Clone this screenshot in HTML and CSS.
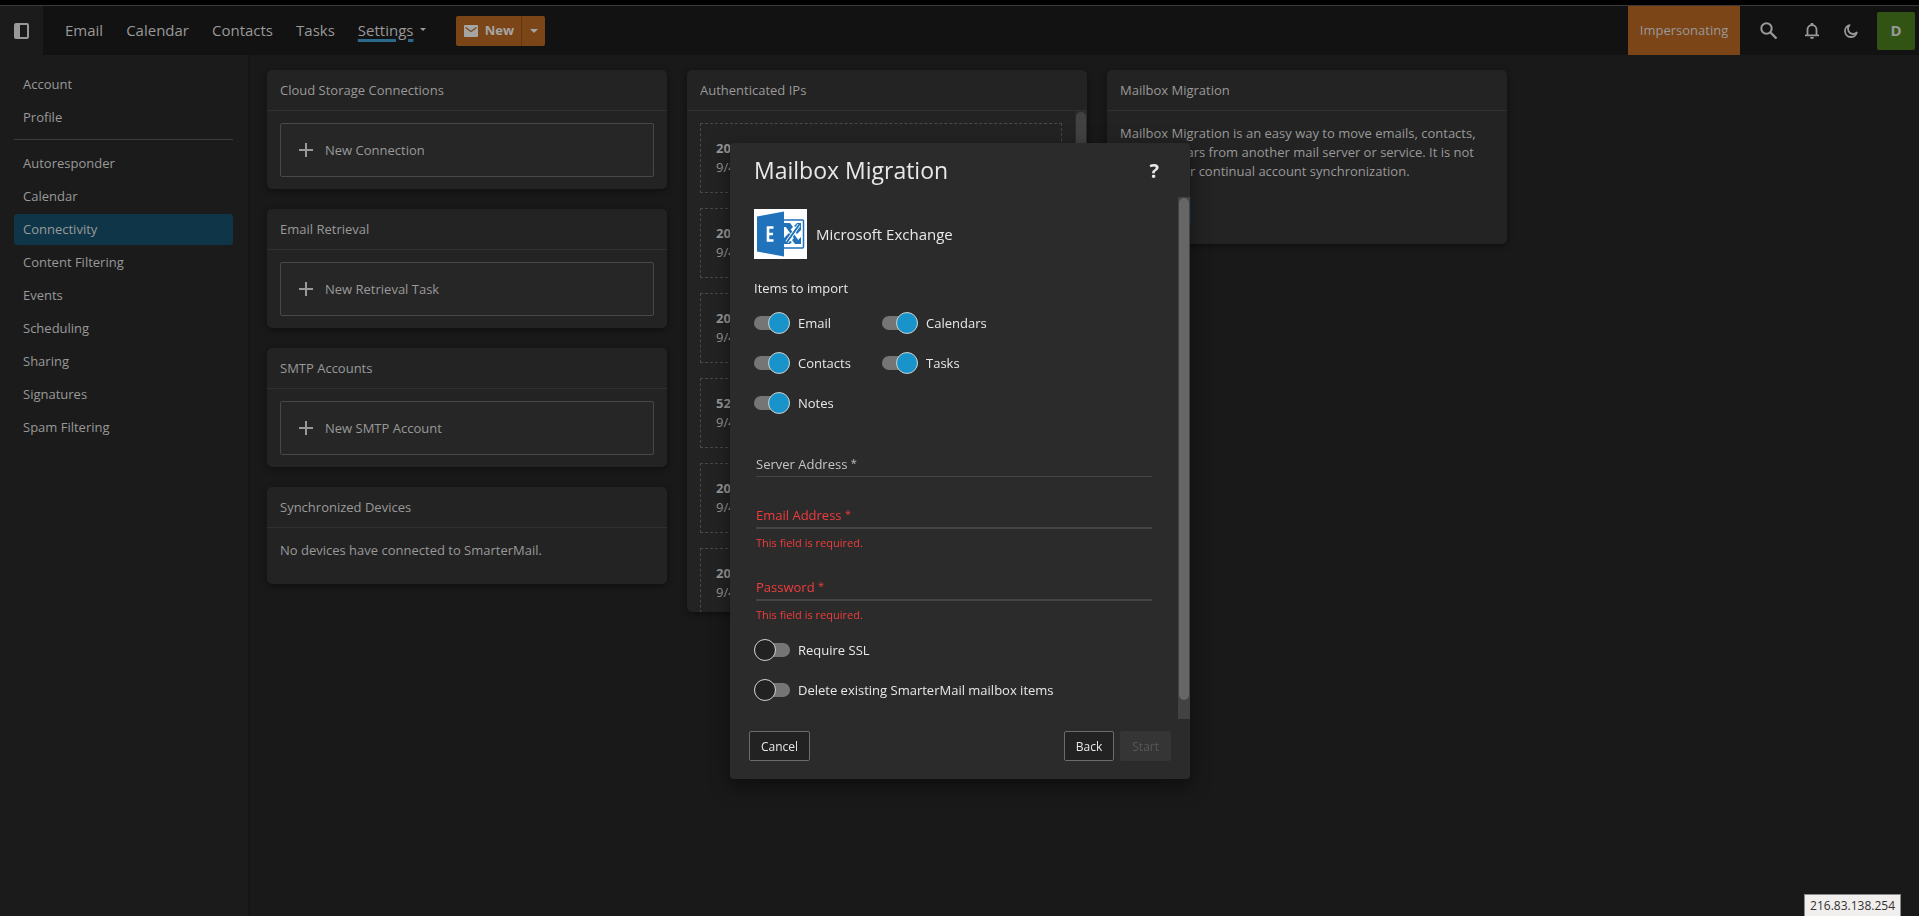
FILE: index.html
```
<!DOCTYPE html>
<html lang="en">
<head>
    <meta charset="UTF-8">
    <meta name="viewport" content="width=device-width, initial-scale=1.0">
    <title>Connectivity - SmarterMail</title>
    <link rel="stylesheet" href="styles.css">
</head>
<body>
    <header class="topbar">
        <button class="toggle-sidebar" aria-label="Toggle sidebar">
            <svg width="15" height="16" viewBox="0 0 15 16"><rect x="1" y="1" width="13" height="14" rx="1" fill="none" stroke="currentColor" stroke-width="2"/><path d="M1 1h5v14H1z" fill="currentColor"/></svg>
        </button>
        <nav class="main-nav">
            <a href="#">Email</a>
            <a href="#">Calendar</a>
            <a href="#">Contacts</a>
            <a href="#">Tasks</a>
            <a href="#" class="current"><span>Settings</span><i class="caret"></i></a>
        </nav>
        <div class="new-group">
            <button class="new-btn">
                <svg width="14" height="12" viewBox="0 0 14 12"><rect width="14" height="12" rx="1" fill="currentColor"/><path d="M1.500 2.500l5.500 4 5.500-4" fill="none" stroke="#7b4517" stroke-width="1.200"/></svg>
                New
            </button>
            <button class="new-more" aria-label="More"><i class="caret"></i></button>
        </div>
        <div class="top-actions">
            <button class="impersonating">Impersonating</button>
            <button class="icon-btn search" aria-label="Search">
                <svg width="18" height="18" viewBox="0 0 18 18" fill="none" stroke="currentColor"><circle cx="6.500" cy="6.500" r="5.200" stroke-width="2"/><path d="M10.500 10.500l6 6" stroke-width="2.400"/></svg>
            </button>
            <button class="icon-btn bell" aria-label="Notifications">
                <svg width="16" height="18" viewBox="0 0 16 18"><path d="M3.500 13V7.500a4.500 4.500 0 0 1 9 0V13M1 13.300h14" fill="none" stroke="currentColor" stroke-width="1.800"/><path d="M6.800 1h2.400v2H6.800zM6 15h4a2 2 0 0 1-4 0z" fill="currentColor"/></svg>
            </button>
            <button class="icon-btn moon" aria-label="Dark mode">
                <svg width="14" height="14" viewBox="0 0 14 14"><path d="M5.500 1.200A6 6 0 1 0 12.800 8.500 4.700 4.700 0 0 1 5.500 1.200z" fill="none" stroke="currentColor" stroke-width="1.800" stroke-linejoin="round"/></svg>
            </button>
            <button class="avatar">D</button>
        </div>
    </header>

    <div class="page">
        <aside class="sidebar">
            <a href="#">Account</a>
            <a href="#">Profile</a>
            <hr>
            <a href="#">Autoresponder</a>
            <a href="#">Calendar</a>
            <a href="#" class="active">Connectivity</a>
            <a href="#">Content Filtering</a>
            <a href="#">Events</a>
            <a href="#">Scheduling</a>
            <a href="#">Sharing</a>
            <a href="#">Signatures</a>
            <a href="#">Spam Filtering</a>
        </aside>

        <main class="content">
            <div class="column">
                <section class="card">
                    <h2>Cloud Storage Connections</h2>
                    <div class="card-body">
                        <button class="add-box"><i class="plus"></i>New Connection</button>
                    </div>
                </section>
                <section class="card">
                    <h2>Email Retrieval</h2>
                    <div class="card-body">
                        <button class="add-box"><i class="plus"></i>New Retrieval Task</button>
                    </div>
                </section>
                <section class="card">
                    <h2>SMTP Accounts</h2>
                    <div class="card-body">
                        <button class="add-box"><i class="plus"></i>New SMTP Account</button>
                    </div>
                </section>
                <section class="card">
                    <h2>Synchronized Devices</h2>
                    <div class="card-body note">
                        <p>No devices have connected to SmarterMail.</p>
                    </div>
                </section>
            </div>

            <div class="column">
                <section class="card">
                    <h2>Authenticated IPs</h2>
                    <div class="ip-scroll">
                        <div class="ip-list">
                            <div class="ip"><b>20</b><span>9/4</span></div>
                            <div class="ip"><b>20</b><span>9/4</span></div>
                            <div class="ip"><b>20</b><span>9/4</span></div>
                            <div class="ip"><b>52</b><span>9/4</span></div>
                            <div class="ip"><b>20</b><span>9/4</span></div>
                            <div class="ip"><b>20</b><span>9/4</span></div>
                        </div>
                        <div class="scrollbar"><div class="thumb"></div></div>
                    </div>
                </section>
            </div>

            <div class="column">
                <section class="card">
                    <h2>Mailbox Migration</h2>
                    <div class="card-body note">
                        <p>Mailbox Migration is an easy way to move emails, contacts, and calendars from another mail server or service. It is not intended for continual account synchronization.</p>
                        <button class="migrate">Start</button>
                    </div>
                </section>
            </div>
        </main>
    </div>

    <div class="overlay">
        <form class="modal" role="dialog" aria-labelledby="modal-title">
            <div class="modal-header">
                <h1 id="modal-title">Mailbox Migration</h1>
                <button type="button" class="help" aria-label="Help">?</button>
            </div>
            <div class="modal-scroll">
                <div class="modal-body">
                    <div class="provider">
                        <svg width="53" height="50" viewBox="0 0 53 50">
                            <rect width="53" height="50" fill="#fff"/>
                            <rect x="26" y="11" width="23.500" height="28" rx="1" fill="#fff" stroke="#2072ba" stroke-width="1.500"/>
                            <path d="M30 14h6l3 4-3 3-3-3h-3zM40 17l3-3h4v7l-4 4-3-3 3-3zM47 28v7h-6l-3-4 3-3 3 3zM38 33l-2 2h-6v-6l5-5 3 3-4 4z" fill="#2072ba"/>
                            <path d="M32 16l12 17" stroke="#2072ba" stroke-width="2.600"/>
                            <path d="M45 16L33 33" stroke="#fff" stroke-width="3.600"/>
                            <path d="M45 16L33 33" stroke="#2072ba" stroke-width="2"/>
                            <path d="M3 7.500l27-5v45l-27-5z" fill="#2072ba"/>
                            <path d="M19.500 18.500H14v13h5.500M14 25h5" fill="none" stroke="#fff" stroke-width="2.600"/>
                        </svg>
                        <span>Microsoft Exchange</span>
                    </div>

                    <p class="items-title">Items to import</p>
                    <div class="items">
                        <label class="switch"><input type="checkbox" checked>Email</label>
                        <label class="switch"><input type="checkbox" checked>Calendars</label>
                        <label class="switch"><input type="checkbox" checked>Contacts</label>
                        <label class="switch"><input type="checkbox" checked>Tasks</label>
                        <label class="switch"><input type="checkbox" checked>Notes</label>
                    </div>

                    <div class="field">
                        <label for="server">Server Address <sup>*</sup></label>
                        <input type="text" id="server">
                    </div>
                    <div class="field invalid">
                        <label for="email">Email Address <sup>*</sup></label>
                        <input type="text" id="email">
                        <p class="error">This field is required.</p>
                    </div>
                    <div class="field invalid">
                        <label for="password">Password <sup>*</sup></label>
                        <input type="password" id="password">
                        <p class="error">This field is required.</p>
                    </div>

                    <div class="options">
                        <label class="switch"><input type="checkbox">Require SSL</label>
                        <label class="switch"><input type="checkbox">Delete existing SmarterMail mailbox items</label>
                    </div>
                </div>
                <div class="scrollbar"><div class="thumb"></div></div>
            </div>
            <div class="modal-footer">
                <button type="button" class="btn">Cancel</button>
                <button type="button" class="btn back">Back</button>
                <button type="submit" class="btn" disabled>Start</button>
            </div>
        </form>
    </div>

    <div class="status-tip">216.83.138.254</div>
</body>
</html>
```
FILE: styles.css
```
:root {
    --bg: #191919;
    --bar: #121212;
    --side: #1b1b1b;
    --card: #232323;
    --line: #303030;
    --text: #999;
    --orange: #7b4517;
    --blue: #1994cb;
    --red: #f13c3c;
}

* {
    box-sizing: border-box;
}

body {
    margin: 0;
    min-height: 100vh;
    display: flex;
    flex-direction: column;
    border-top: 5px solid #000;
    background: var(--bg);
    color: var(--text);
    font-family: 'Open Sans', 'Segoe UI', 'Noto Sans', sans-serif;
    font-size: 13px;
    line-height: 19px;
    overflow: hidden;
}

a {
    color: inherit;
    text-decoration: none;
}

button {
    border: none;
    padding: 0;
    background: none;
    color: inherit;
    font: inherit;
    cursor: pointer;
}

p {
    margin: 0;
}

svg {
    display: block;
}

/* Top bar */
.topbar {
    height: 50px;
    display: flex;
    align-items: center;
    background: var(--bar);
    border-top: 1px solid #3a3a3a;
}

.toggle-sidebar {
    width: 43px;
    height: 49px;
    padding-left: 14px;
    background: var(--side);
}

.main-nav {
    display: flex;
    gap: 23px;
    margin-left: 22px;
    padding-bottom: 2px;
    font-size: 15px;
    line-height: 22px;
}

.current {
    display: flex;
    align-items: center;
    gap: 7px;
}

.current span {
    text-decoration: underline #2c6a8c 3px;
    text-underline-offset: 3px;
}

.caret {
    border: 4px solid transparent;
    border-top-color: currentColor;
    border-bottom: 0;
}

.current .caret {
    border-width: 3px;
    border-bottom: 0;
}

.new-group {
    display: flex;
    height: 30px;
    margin-left: 30px;
    border-radius: 2px;
    background: var(--orange);
    color: #a5a5a5;
}

.new-btn {
    width: 66px;
    display: flex;
    align-items: center;
    justify-content: center;
    gap: 7px;
    font-weight: 700;
    border-right: 1px solid #5f3613;
}

.new-more {
    width: 23px;
    display: flex;
    align-items: center;
    justify-content: center;
}

.top-actions {
    height: 100%;
    display: flex;
    align-items: center;
    margin-left: auto;
    padding-right: 4px;
}

.impersonating {
    width: 112px;
    height: 49px;
    margin-right: 20px;
    background: var(--orange);
}

.search {
    margin-right: 26px;
}

.bell {
    margin-right: 24px;
}

.moon {
    margin-right: 19px;
}

.avatar {
    width: 38px;
    height: 38px;
    border-radius: 2px;
    background: #315414;
    font-size: 15px;
    font-weight: 700;
}

/* Sidebar */
.page {
    flex: 1;
    display: flex;
}

.sidebar {
    width: 250px;
    flex: none;
    display: flex;
    flex-direction: column;
    gap: 2px;
    padding: 14px 15px 14px 14px;
    background: var(--side);
    border-right: 2px solid #151515;
}

.sidebar a {
    padding: 6px 9px;
    border-radius: 3px;
}

.sidebar .active {
    background: #0f3648;
}

.sidebar hr {
    width: 100%;
    height: 1px;
    margin: 4px 0 6px;
    border: none;
    background: #3d3d3d;
}

/* Cards */
.content {
    flex: 1;
    display: flex;
    align-items: flex-start;
    gap: 20px;
    padding: 15px 17px;
}

.column {
    flex: 0 1 400px;
    display: flex;
    flex-direction: column;
    gap: 20px;
}

.card {
    border-radius: 5px;
    background: var(--card);
    box-shadow: 0 2px 6px rgba(0, 0, 0, 0.4);
    overflow: hidden;
}

.card h2 {
    margin: 0;
    padding: 11px 13px 10px;
    border-bottom: 1px solid var(--line);
    font-size: 13px;
    font-weight: 400;
}

.card-body {
    padding: 12px 13px;
}

.add-box {
    width: 100%;
    height: 54px;
    display: flex;
    align-items: center;
    gap: 12px;
    padding-left: 18px;
    border: 1px solid #484848;
    border-radius: 2px;
    background: #262626;
}

.plus {
    width: 14px;
    height: 14px;
    background: linear-gradient(currentColor, currentColor) center / 14px 2px no-repeat,
        linear-gradient(currentColor, currentColor) center / 2px 14px no-repeat;
}

.note {
    padding: 13px 13px 19px;
}

.note p {
    margin-bottom: 5px;
}

.migrate {
    width: 71px;
    height: 28px;
    display: block;
    margin-top: 16px;
    background: #0f3648;
}

.ip-scroll {
    height: 501px;
    display: flex;
    overflow: hidden;
}

.ip-list {
    flex: 1;
    display: flex;
    flex-direction: column;
    gap: 15px;
    padding: 12px 13px 0;
}

.ip {
    flex: none;
    height: 70px;
    display: flex;
    flex-direction: column;
    padding: 15px;
    border: 1px dashed #484848;
}

.ip-scroll .scrollbar {
    background: #2b2b2b;
}

.ip-scroll .thumb {
    height: 400px;
    background: #424242;
}

.scrollbar {
    width: 12px;
    flex: none;
    padding: 1px;
    background: #424242;
}

.thumb {
    border-radius: 5px;
    background: #666;
}

/* Dialog */
.overlay {
    position: fixed;
    inset: 6px 0 0 1px;
    display: flex;
    align-items: center;
    justify-content: center;
}

.modal {
    width: 460px;
    border-radius: 4px;
    background: #2b2b2b;
    color: #e8e8e8;
    box-shadow: 0 6px 20px rgba(0, 0, 0, 0.5);
}

.modal-header {
    display: flex;
    align-items: center;
    justify-content: space-between;
    padding: 11px 31px 11px 24px;
}

.modal-header h1 {
    margin: 0;
    font-size: 23px;
    font-weight: 400;
    line-height: 32px;
}

.help {
    font-size: 20px;
    font-weight: 700;
}

.modal-scroll {
    display: flex;
}

.modal-scroll .thumb {
    height: 502px;
}

.modal-body {
    flex: 1;
    padding: 12px 26px 19px 24px;
}

.provider {
    display: flex;
    align-items: center;
    gap: 9px;
    font-size: 15px;
}

.items-title {
    margin: 20px 0 15px;
}

.items {
    display: grid;
    grid-template-columns: 128px 1fr;
    row-gap: 20px;
    margin-bottom: 42px;
}

.switch {
    display: flex;
    align-items: center;
    gap: 8px;
    height: 20px;
}

.switch input {
    appearance: none;
    width: 36px;
    height: 14px;
    margin: 0;
    display: flex;
    align-items: center;
    background: #757575;
    border-radius: 7px;
}

.switch input::before {
    content: '';
    flex: none;
    width: 20px;
    height: 20px;
    border: 1px solid #d0d0d0;
    border-radius: 50%;
    background: #222;
}

.switch input:checked {
    justify-content: flex-end;
}

.switch input:checked::before {
    background: var(--blue);
}

.field {
    display: flex;
    flex-direction: column;
    position: relative;
    margin: 0 0 29px 2px;
}

.field label {
    position: absolute;
    top: 0;
    left: 0;
    color: #c4c4c4;
}

.field sup {
    font-size: 11px;
    line-height: 0;
    vertical-align: 2px;
}

.field input {
    height: 22px;
    padding: 0;
    border: none;
    border-bottom: 1px solid #454545;
    background: none;
    color: inherit;
    font: inherit;
    outline: none;
}

.field.invalid {
    margin-bottom: 27px;
}

.field.invalid label,
.error {
    color: var(--red);
}

.field.invalid input {
    height: 23px;
    border-bottom-width: 2px;
}

.error {
    margin-top: 5px;
    font-size: 11px;
    line-height: 17px;
}

.options {
    display: flex;
    flex-direction: column;
    gap: 20px;
    margin-top: -10px;
}

.modal-footer {
    display: flex;
    gap: 6px;
    padding: 12px 19px 18px;
}

.btn {
    height: 30px;
    padding: 0 11px;
    border: 1px solid #6b6b6b;
    border-radius: 2px;
    background: #222;
    font-size: 12px;
}

.btn.back {
    margin-left: auto;
}

.btn:disabled {
    border-color: #353535;
    background: #353535;
    color: #575757;
}

.status-tip {
    position: fixed;
    right: 18px;
    bottom: 0;
    padding: 1px 5px;
    border: 1px solid #8a8a8a;
    border-bottom: none;
    background: #f1eeee;
    color: #333;
    font-size: 12px;
}
```
